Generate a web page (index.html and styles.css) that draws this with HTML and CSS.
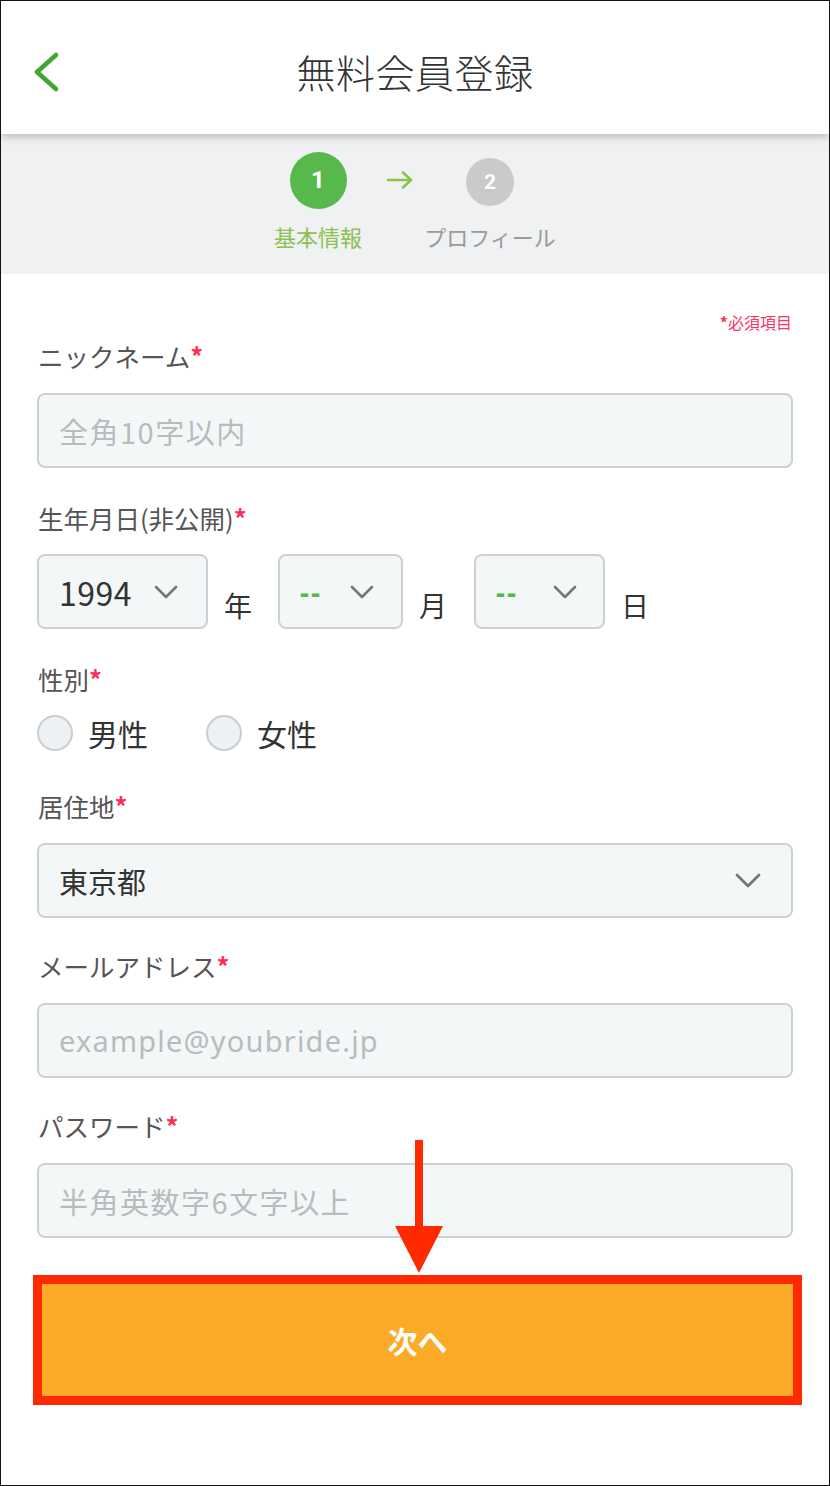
FILE: index.html
```html
<!DOCTYPE html>
<html lang="ja">
<head>
<meta charset="utf-8">
<title>無料会員登録</title>
<link rel="stylesheet" href="styles.css">
</head>
<body>
<div class="page">
  <header class="header">
    <svg class="back" width="28" height="40" viewBox="0 0 28 40" aria-hidden="true">
      <polyline points="24,3 5,20 24,37" fill="none" stroke="#3fa535" stroke-width="4.5" stroke-linecap="round" stroke-linejoin="round"/>
    </svg>
    <h1 class="title">無料会員登録</h1>
  </header>

  <section class="steps">
    <div class="step-grid">
      <div class="circle circle-active">1</div>
      <svg class="step-arrow" width="28" height="20" viewBox="0 0 28 20" aria-hidden="true">
        <path d="M2 10 H25 M17 2.5 L25 10 L17 17.5" fill="none" stroke="#8bc34a" stroke-width="2.6" stroke-linecap="round" stroke-linejoin="round"/>
      </svg>
      <div class="circle circle-next">2</div>
      <div class="step-label active">基本情報</div>
      <div></div>
      <div class="step-label">プロフィール</div>
    </div>
  </section>

  <main class="form">
    <div class="note"><span class="req">*</span>必須項目</div>

    <div class="field f-nick">
      <div class="label">ニックネーム<span class="req">*</span></div>
      <div class="input"><span class="ph">全角10字以内</span></div>
    </div>

    <div class="field f-birth">
      <div class="label">生年月日(非公開)<span class="req">*</span></div>
      <div class="date-row">
        <div class="select sel-year"><span class="val">1994</span><svg class="chev" width="24" height="14" viewBox="0 0 24 14"><polyline points="2,2 12,12 22,2" fill="none" stroke="#777" stroke-width="2.6" stroke-linecap="round" stroke-linejoin="round"/></svg></div>
        <span class="unit u-year">年</span>
        <div class="select sel-month"><span class="dash">--</span><svg class="chev" width="24" height="14" viewBox="0 0 24 14"><polyline points="2,2 12,12 22,2" fill="none" stroke="#777" stroke-width="2.6" stroke-linecap="round" stroke-linejoin="round"/></svg></div>
        <span class="unit u-month">月</span>
        <div class="select sel-day"><span class="dash">--</span><svg class="chev" width="24" height="14" viewBox="0 0 24 14"><polyline points="2,2 12,12 22,2" fill="none" stroke="#777" stroke-width="2.6" stroke-linecap="round" stroke-linejoin="round"/></svg></div>
        <span class="unit u-day">日</span>
      </div>
    </div>

    <div class="field f-gender">
      <div class="label">性別<span class="req">*</span></div>
      <div class="radio-row">
        <label class="radio"><span class="dot"></span><span class="rtext">男性</span></label>
        <label class="radio"><span class="dot"></span><span class="rtext">女性</span></label>
      </div>
    </div>

    <div class="field f-area">
      <div class="label">居住地<span class="req">*</span></div>
      <div class="input select-wide"><span class="val">東京都</span><svg class="chev" width="26" height="15" viewBox="0 0 26 15"><polyline points="2,2 13,13 24,2" fill="none" stroke="#777" stroke-width="2.8" stroke-linecap="round" stroke-linejoin="round"/></svg></div>
    </div>

    <div class="field f-mail">
      <div class="label">メールアドレス<span class="req">*</span></div>
      <div class="input"><span class="ph latin">example@youbride.jp</span></div>
    </div>

    <div class="field f-pass">
      <div class="label">パスワード<span class="req">*</span></div>
      <div class="input"><span class="ph">半角英数字6文字以上</span></div>
    </div>

    <button class="next" type="button">次へ</button>
  </main>

  <svg class="annot-arrow" width="48" height="134" viewBox="0 0 48 134" aria-hidden="true">
    <rect x="20" y="0" width="8" height="92" fill="#ff2a00"/>
    <polygon points="0,86 48,86 24,133" fill="#ff2a00"/>
  </svg>
</div>
</body>
</html>
```

FILE: styles.css
```css
* { box-sizing: border-box; }

html, body {
  margin: 0;
  padding: 0;
  background: #fff;
}

body {
  font-family: "Noto Sans CJK JP", "Noto Sans", sans-serif;
  color: #333;
}

.page {
  position: relative;
  width: 830px;
  height: 1486px;
  border: 1px solid #111;
  background: #fff;
  overflow: hidden;
}

/* Header */
.header {
  position: relative;
  z-index: 2;
  height: 133px;
  display: flex;
  align-items: center;
  justify-content: center;
  padding-top: 6px;
  background: #fff;
  box-shadow: 0 3px 8px rgba(0, 0, 0, 0.22);
}

.back {
  position: absolute;
  left: 31px;
  top: 51px;
}

.title {
  margin: 0;
  font-size: 39px;
  font-weight: 300;
  color: #333;
  letter-spacing: 0.5px;
}

/* Steps */
.steps {
  height: 140px;
  background: #eff1f2;
  display: flex;
  justify-content: center;
  padding-right: 22px;
}

.step-grid {
  display: grid;
  grid-template-columns: 140px 32px 140px;
  grid-template-rows: 72px 40px;
  align-items: center;
  justify-items: center;
  padding-top: 10px;
}

.circle {
  border-radius: 50%;
  color: #fff;
  font-weight: 700;
  display: flex;
  align-items: center;
  justify-content: center;
  font-family: "Roboto", "Noto Sans", sans-serif;
}

.circle-active {
  width: 57px;
  height: 57px;
  background: #57b84c;
  font-size: 24px;
}

.circle-next {
  width: 48px;
  height: 48px;
  background: #c8cacc;
  font-size: 21px;
  margin-top: 4px;
}

.step-arrow {
  margin-right: 8px;
}

.step-label {
  font-size: 22px;
  color: #9a9a9a;
  white-space: nowrap;
}

.step-label.active {
  color: #8cc152;
}

/* Form */
.form {
  padding: 0 36px;
  display: flex;
  flex-direction: column;
}

.note {
  margin-top: 36px;
  line-height: 24px;
  font-size: 16px;
  text-align: right;
  color: #ff3366;
  padding-right: 1px;
}

.req {
  color: #ff2d55;
  font-weight: 700;
}

.label {
  line-height: 36px;
  height: 36px;
  font-size: 25.5px;
  color: #555;
  padding-left: 1px;
  white-space: nowrap;
}

.field { display: flex; flex-direction: column; }

.f-nick { margin-top: 4px; }
.f-birth { margin-top: 32px; }
.f-gender { margin-top: 32px; }
.f-area { margin-top: 37px; }
.f-mail { margin-top: 30px; }
.f-pass { margin-top: 30px; }

.input {
  margin-top: 19px;
  height: 75px;
  border: 2px solid #cdd1d3;
  border-radius: 8px;
  background: #f4f7f8;
  display: flex;
  align-items: center;
  padding: 0 20px;
  font-size: 29px;
}

.ph {
  color: #b9bbbc;
  white-space: nowrap;
  letter-spacing: 1.5px;
}

.ph.latin {
  font-family: "Noto Sans", "Noto Sans CJK JP", sans-serif;
  font-size: 29px;
  letter-spacing: 1.2px;
}

.val {
  color: #333;
  white-space: nowrap;
}

.select-wide {
  justify-content: space-between;
  padding-right: 30px;
  font-size: 29px;
}

/* Date row */
.date-row {
  margin-top: 18px;
  display: flex;
  align-items: flex-end;
}

.select {
  height: 75px;
  border: 2px solid #cdd1d3;
  border-radius: 8px;
  background: #f4f7f8;
  display: flex;
  align-items: center;
  padding: 0 0 0 20px;
  gap: 22px;
  flex: none;
}

.sel-year { width: 171px; font-size: 32px; }
.sel-year .val { letter-spacing: 0.5px; }
.sel-month { width: 125px; margin-left: 26px; }
.sel-day { width: 131px; margin-left: 27px; gap: 29px; }

.chev { flex: none; }

.dash {
  flex: none;
  display: inline-block;
  white-space: nowrap;
  color: #57b84c;
  font-family: "Noto Sans", sans-serif;
  font-size: 28px;
  font-weight: 700;
  letter-spacing: 2px;
  width: 28px;
  line-height: 1;
}

.unit {
  font-size: 28px;
  color: #333;
  line-height: 28px;
  padding-bottom: 10px;
  margin-left: 16px;
  flex: none;
}

/* Radios */
.radio-row {
  margin-top: 18px;
  display: flex;
  align-items: center;
  height: 36px;
}

.radio {
  display: flex;
  align-items: center;
  gap: 15px;
  margin-right: 58px;
}

.dot {
  width: 36px;
  height: 36px;
  border-radius: 50%;
  border: 2px solid #cbced0;
  background: #eef1f3;
}

.rtext {
  font-size: 30px;
  color: #333;
}

/* Button */
.next {
  margin-top: 46px;
  margin-left: 5px;
  height: 112px;
  border: none;
  background: #fcab28;
  color: #fff;
  font-family: "Noto Sans CJK JP", sans-serif;
  font-size: 30px;
  font-weight: 700;
  outline: 9px solid #ff2a00;
  padding: 0;
}

/* Annotation arrow */
.annot-arrow {
  position: absolute;
  left: 394px;
  top: 1139px;
  z-index: 3;
}
```
